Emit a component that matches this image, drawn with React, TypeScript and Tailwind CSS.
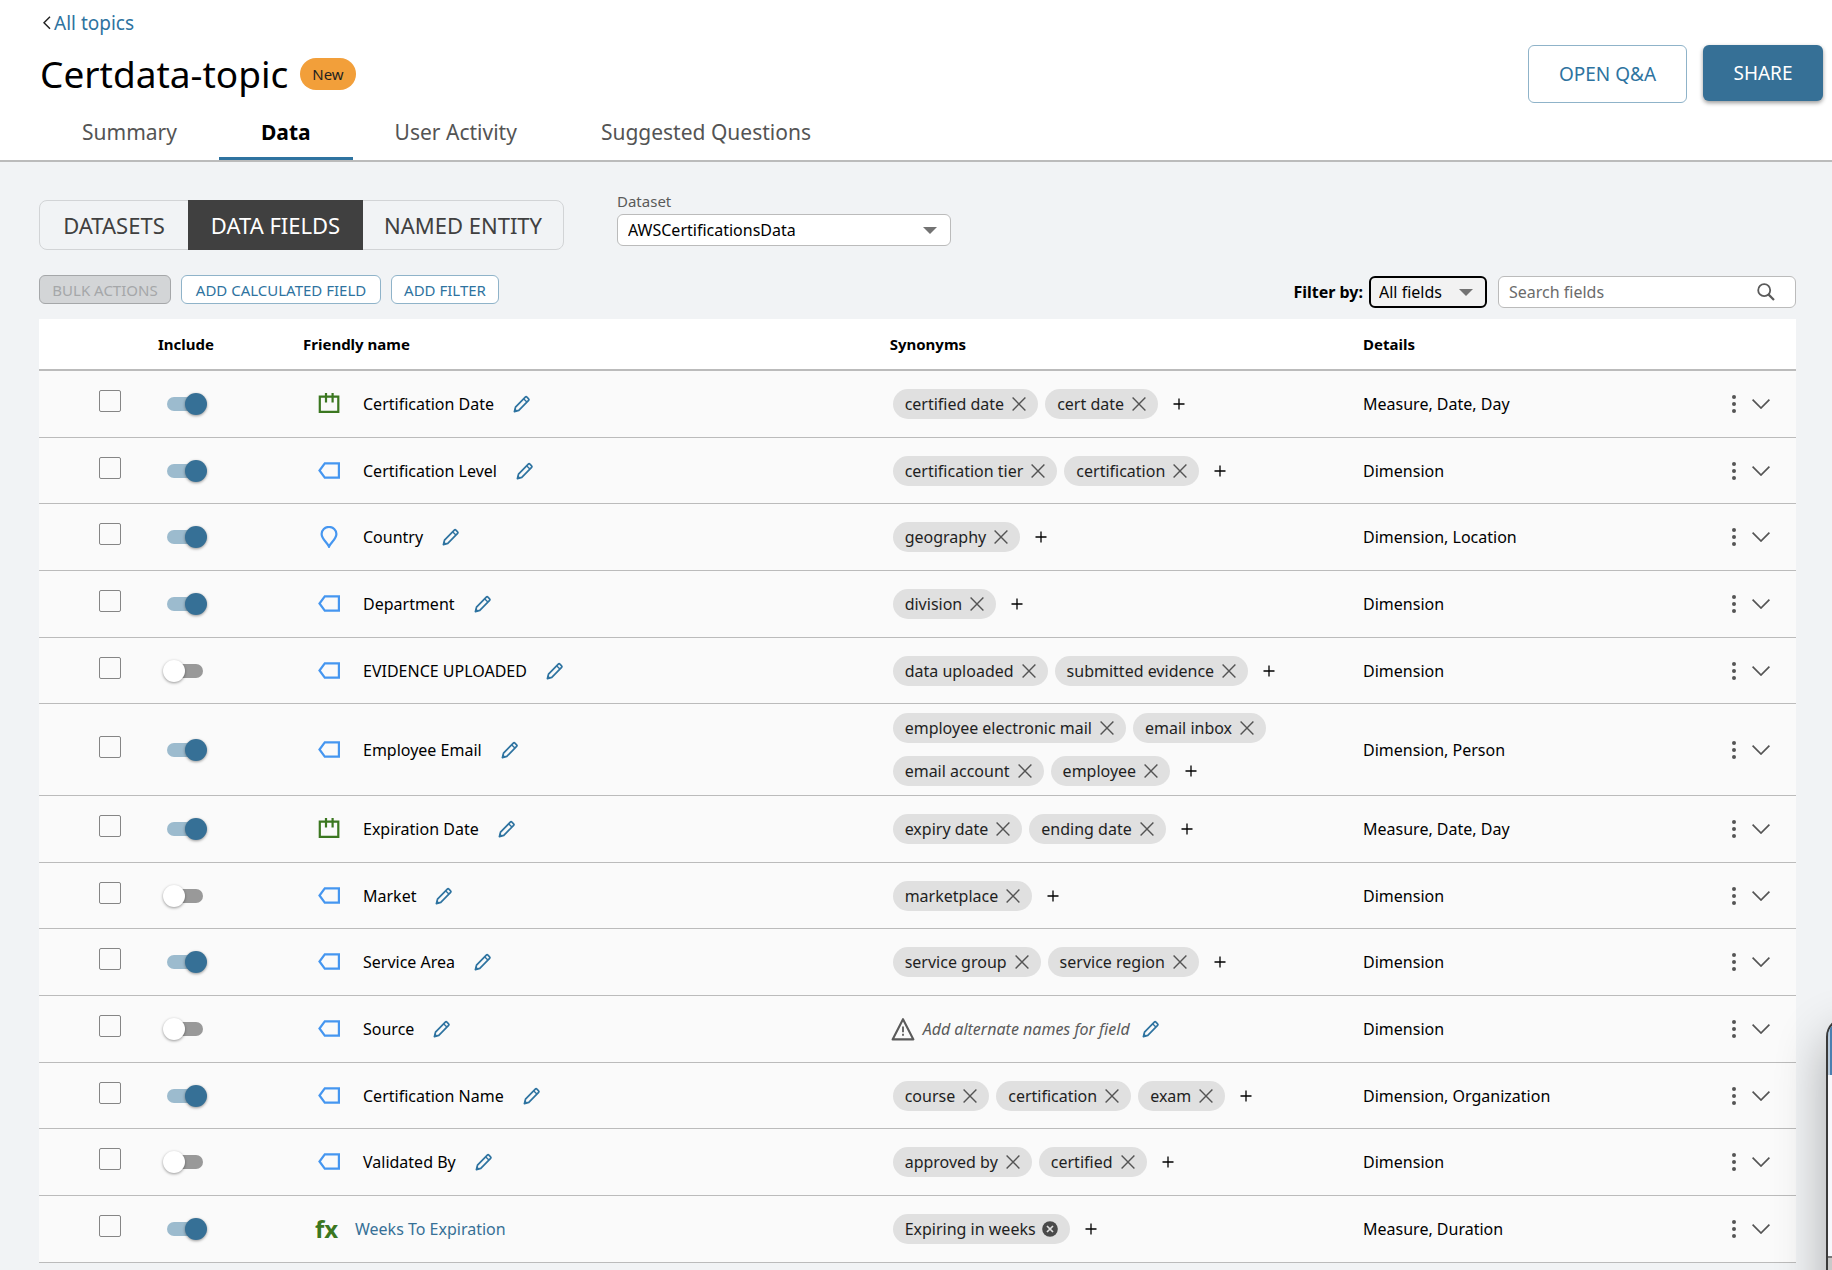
import React, { useState } from 'react';

type FieldKind = 'date' | 'tag' | 'location' | 'calculated';

interface Field {
    name: string;
    kind: FieldKind;
    included: boolean;
    synonyms: string[];
    details: string;
}

const FIELDS: Field[] = [
    { name: 'Certification Date', kind: 'date', included: true, synonyms: ['certified date', 'cert date'], details: 'Measure, Date, Day' },
    { name: 'Certification Level', kind: 'tag', included: true, synonyms: ['certification tier', 'certification'], details: 'Dimension' },
    { name: 'Country', kind: 'location', included: true, synonyms: ['geography'], details: 'Dimension, Location' },
    { name: 'Department', kind: 'tag', included: true, synonyms: ['division'], details: 'Dimension' },
    { name: 'EVIDENCE UPLOADED', kind: 'tag', included: false, synonyms: ['data uploaded', 'submitted evidence'], details: 'Dimension' },
    { name: 'Employee Email', kind: 'tag', included: true, synonyms: ['employee electronic mail', 'email inbox', 'email account', 'employee'], details: 'Dimension, Person' },
    { name: 'Expiration Date', kind: 'date', included: true, synonyms: ['expiry date', 'ending date'], details: 'Measure, Date, Day' },
    { name: 'Market', kind: 'tag', included: false, synonyms: ['marketplace'], details: 'Dimension' },
    { name: 'Service Area', kind: 'tag', included: true, synonyms: ['service group', 'service region'], details: 'Dimension' },
    { name: 'Source', kind: 'tag', included: false, synonyms: [], details: 'Dimension' },
    { name: 'Certification Name', kind: 'tag', included: true, synonyms: ['course', 'certification', 'exam'], details: 'Dimension, Organization' },
    { name: 'Validated By', kind: 'tag', included: false, synonyms: ['approved by', 'certified'], details: 'Dimension' },
    { name: 'Weeks To Expiration', kind: 'calculated', included: true, synonyms: ['Expiring in weeks'], details: 'Measure, Duration' },
];

const TABS = ['Summary', 'Data', 'User Activity', 'Suggested Questions'];

const PencilIcon = () => (
    <svg className="w-[18px] h-[18px] text-[#2e73a0]" viewBox="0 0 18 18" fill="none" stroke="currentColor" strokeWidth="1.7" strokeLinejoin="round">
        <path d="M1.4 16.6 2.5 12.2 12.3 2.1Q13.1 1.3 13.9 2.1L15.6 3.8Q16.4 4.6 15.6 5.4L5.8 15.4Z" />
        <path d="M10.8 3.9 13.9 7" strokeWidth="1.4" />
        <path d="M1.4 16.6 2.1 13.9 4.1 15.9Z" fill="currentColor" strokeWidth="1" />
    </svg>
);

const CloseIcon = () => (
    <svg className="w-[14px] h-[14px]" viewBox="0 0 14 14" fill="none" stroke="#545454" strokeWidth="1.4">
        <path d="M.6.6 13.4 13.4M13.4.6.6 13.4" />
    </svg>
);

const CloseFilledIcon = () => (
    <svg className="w-4 h-4" viewBox="0 0 16 16" fill="none">
        <circle cx="8" cy="8" r="7.8" fill="#4a4a4a" />
        <path d="M5 5 11 11M11 5 5 11" stroke="#e0e0e0" strokeWidth="1.7" />
    </svg>
);

const CaretIcon = () => (
    <svg className="w-[14px] h-[7px]" viewBox="0 0 14 7">
        <path d="M0 0H14L7 7Z" fill="#737373" />
    </svg>
);

const KindIcon = ({ kind }: { kind: FieldKind }) => {
    switch (kind) {
        case 'date':
            return (
                <svg className="w-[22px] h-[22px]" viewBox="0 0 22 22" fill="none" stroke="#3b7720" strokeWidth="2.2">
                    <path d="M1.8 3.6H20.3V18.9H1.8ZM8 0V9.4M14.6 0V9.4" />
                </svg>
            );
        case 'location':
            return (
                <svg className="w-[22px] h-[22px]" viewBox="0 0 22 22" fill="none" stroke="#4596f0" strokeWidth="2.2">
                    <path d="M11 20.6C9.6 17 3.6 13 3.6 7.9A7.4 7 0 0 1 18.4 7.9C18.4 13 12.4 17 11 20.6Z" />
                </svg>
            );
        case 'calculated':
            return <span className="w-6 text-2xl leading-6 font-bold text-[#3b7720]">fx</span>;
        default:
            return (
                <svg className="w-[22px] h-[22px]" viewBox="0 0 22 22" fill="none" stroke="#4596f0" strokeWidth="2.2">
                    <path d="M6.8 3.4H20.9V17.6H6.8L1.5 10.5Z" />
                </svg>
            );
    }
};

const Synonyms = ({ field }: { field: Field }) => {
    if (field.synonyms.length === 0) {
        return (
            <div className="flex items-center pl-0.5">
                <svg className="w-6 h-6" viewBox="0 0 24 24" fill="none" stroke="#5a5a5a" strokeWidth="2.1" strokeLinejoin="round">
                    <path d="M12 2.2 22.4 22.4H1.6Z" />
                    <path d="M12 9.5V15.2M12 16.8V18.8" strokeWidth="1.8" />
                </svg>
                <span className="ml-2 italic text-[#5a5a5a]">Add alternate names for field</span>
                <button className="ml-3" aria-label={`Add synonyms for ${field.name}`}><PencilIcon /></button>
            </div>
        );
    }
    return (
        <div className="flex flex-wrap items-center gap-x-[7px] gap-y-[13px] max-w-[420px] pl-1">
            {field.synonyms.map((synonym) => (
                <span key={synonym} className="flex items-center h-[30px] px-3 rounded-full bg-[#e0e0e0] text-[#1f1f1f] whitespace-nowrap">
                    {synonym}
                    <button className={field.kind === 'calculated' ? 'ml-1.5' : 'ml-2'} aria-label={`Remove ${synonym}`}>
                        {field.kind === 'calculated' ? <CloseFilledIcon /> : <CloseIcon />}
                    </button>
                </span>
            ))}
            <button className="ml-2" aria-label={`Add synonym to ${field.name}`}>
                <svg className="w-3 h-3" viewBox="0 0 12 12" stroke="#000" strokeWidth="1.3">
                    <path d="M6 .5V11.5M.5 6H11.5" />
                </svg>
            </button>
        </div>
    );
};

const FieldRow = ({ field }: { field: Field }) => {
    const [included, setIncluded] = useState(field.included);
    const calculated = field.kind === 'calculated';

    return (
        <tr className="h-[67px] nth-[3n+2]:h-[66px] bg-[#fafafa] *:border-b *:border-[#bbb]">
            <td className="pl-[60px] pb-[6px]">
                <input
                    type="checkbox"
                    aria-label={`Select ${field.name}`}
                    className="block appearance-none w-[22px] h-[22px] border border-[#858585] rounded-[2px] checked:bg-[#367096]"
                />
            </td>
            <td className="pl-[9px]">
                <input
                    type="checkbox"
                    role="switch"
                    aria-label={`Include ${field.name}`}
                    checked={included}
                    onChange={() => setIncluded(!included)}
                    className="relative block appearance-none w-9 h-[14px] rounded-full bg-[#999] checked:bg-[#9cbbce] before:absolute before:-top-1 before:-left-1 before:w-[22px] before:h-[22px] before:rounded-full before:bg-white before:shadow-[0_1px_3px_rgba(0,0,0,0.4)] checked:before:left-[18px] checked:before:bg-[#367096]"
                />
            </td>
            <td>
                <div className={`flex items-center ${calculated ? 'pl-3 gap-4' : 'pl-[15px] gap-[23px]'}`}>
                    <KindIcon kind={field.kind} />
                    {calculated ? (
                        <a href="#" className="text-[#367096]">{field.name}</a>
                    ) : (
                        <span className="flex items-center gap-[19px]">
                            {field.name}
                            <button aria-label={`Rename ${field.name}`}><PencilIcon /></button>
                        </span>
                    )}
                </div>
            </td>
            <td className="py-[9px]"><Synonyms field={field} /></td>
            <td>{field.details}</td>
            <td>
                <div className="flex items-center justify-end gap-4 pr-[26px]">
                    <button aria-label={`Actions for ${field.name}`}>
                        <svg className="w-1 h-[18px]" viewBox="0 0 4 18" fill="#545454">
                            <circle cx="2" cy="2" r="2" />
                            <circle cx="2" cy="9" r="2" />
                            <circle cx="2" cy="16" r="2" />
                        </svg>
                    </button>
                    <button aria-label={`Expand ${field.name}`}>
                        <svg className="w-[18px] h-[10px]" viewBox="0 0 18 10" fill="none" stroke="#545454" strokeWidth="1.7">
                            <path d="M.6.6 9 9 17.4.6" />
                        </svg>
                    </button>
                </div>
            </td>
        </tr>
    );
};

const App: React.FC = () => {
    return (
        <div className="relative min-h-screen overflow-hidden bg-[#f1f3f5] font-['Noto_Sans',sans-serif] text-base leading-6 text-black">
            <header className="bg-white border-b-2 border-[#bbb]">
                <div className="flex justify-between pl-10 pr-[9px] pt-[9px]">
                    <div>
                        <a href="#" className="flex items-center gap-[3px] pl-[3px] text-[19px] leading-7 text-[#2e73a0]">
                            <svg className="w-2 h-[14px]" viewBox="0 0 8 14" fill="none" stroke="#222" strokeWidth="1.5">
                                <path d="M7 .8 1 6.8 7 12.8" />
                            </svg>
                            All topics
                        </a>
                        <div className="flex items-center gap-3 mt-[11px]">
                            <h1 className="text-[37px] leading-[52px]">Certdata-topic</h1>
                            <span className="flex items-center h-8 px-3 rounded-full bg-[#f29f3a] text-[15px] text-[#1f1f1f]">New</span>
                        </div>
                    </div>
                    <div className="flex items-start gap-4 pt-9 text-[19px]">
                        <button className="w-[159px] h-[58px] border border-[#8fb3c9] rounded-md text-[#2e73a0]">OPEN Q&amp;A</button>
                        <button className="w-[120px] h-14 rounded-md bg-[#367096] text-white shadow-[0_2px_4px_rgba(0,0,0,0.4)]">SHARE</button>
                    </div>
                </div>
                <nav className="flex pl-10 mt-[7px] text-[21px]">
                    {TABS.map((tab) => (
                        <a
                            key={tab}
                            href="#"
                            className={`px-[42px] pt-2.5 pb-[13px] border-b-3 ${tab === 'Data' ? 'font-bold border-[#2e73a0]' : 'text-[#545454] border-transparent'}`}
                        >
                            {tab}
                        </a>
                    ))}
                </nav>
            </header>

            <main className="pl-[39px] pr-9 pt-[27px] pb-2">
                <div className="flex items-end gap-[53px]">
                    <div className="flex h-[50px] mt-2.5 border border-[#d2d4d6] rounded-lg text-[22px] text-[#404040]">
                        <button className="w-[148px]">DATASETS</button>
                        <button className="w-[175px] -my-px bg-[#404040] text-white">DATA FIELDS</button>
                        <button className="w-[200px]">NAMED ENTITY</button>
                    </div>
                    <div className="pb-1">
                        <label htmlFor="dataset" className="block mb-px text-[15px] text-[#5a5a5a]">Dataset</label>
                        <div className="flex items-center w-[334px]">
                            <select id="dataset" className="appearance-none grow h-8 pl-2.5 border border-[#bbb] rounded-md bg-white">
                                <option>AWSCertificationsData</option>
                            </select>
                            <span className="pointer-events-none w-7 -ml-7"><CaretIcon /></span>
                        </div>
                    </div>
                </div>

                <div className="flex items-start justify-between mt-[25px] mb-[11px]">
                    <div className="flex gap-2.5 text-[15px] text-[#2e73a0]">
                        <button disabled className="w-[132px] h-[29px] border border-[#a5a7a9] rounded-md bg-[#d3d5d7] text-[#a5a7a9]">BULK ACTIONS</button>
                        <button className="w-[200px] h-[29px] border border-[#8fb3c9] rounded-md bg-white">ADD CALCULATED FIELD</button>
                        <button className="w-[108px] h-[29px] border border-[#8fb3c9] rounded-md bg-white">ADD FILTER</button>
                    </div>
                    <div className="flex items-center pt-px">
                        <label htmlFor="filter" className="mr-1.5 font-bold">Filter by:</label>
                        <div className="flex items-center w-[118px] mr-[11px]">
                            <select id="filter" className="appearance-none grow h-8 pl-2 border-2 border-black rounded-md bg-[#f2f2f2]">
                                <option>All fields</option>
                            </select>
                            <span className="pointer-events-none w-7 -ml-7"><CaretIcon /></span>
                        </div>
                        <div className="flex items-center w-[298px] h-8 pl-2.5 pr-5 border border-[#bbb] rounded-md bg-white">
                            <input type="text" aria-label="Search fields" placeholder="Search fields" className="grow min-w-0 outline-none placeholder:text-[#6b6b6b]" />
                            <svg className="w-[18px] h-[18px]" viewBox="0 0 18 18" fill="none" stroke="#5a5a5a" strokeWidth="1.8">
                                <circle cx="7.2" cy="7.2" r="6" />
                                <path d="M11.4 11.4 17 17" strokeWidth="2.2" />
                            </svg>
                        </div>
                    </div>
                </div>

                <table className="w-full table-fixed border-separate border-spacing-0 text-left">
                    <thead>
                        <tr className="h-[52px] bg-white text-[15px] *:border-b-2 *:border-[#bbb]">
                            <th className="w-[119px]" />
                            <th className="w-[145px]">Include</th>
                            <th className="w-1/3">Friendly name</th>
                            <th className="w-[27%] pl-px">Synonyms</th>
                            <th>Details</th>
                            <th className="w-[120px]" />
                        </tr>
                    </thead>
                    <tbody>
                        {FIELDS.map((field) => <FieldRow key={field.name} field={field} />)}
                    </tbody>
                </table>
            </main>

            {/* Floating window peeking in from the right edge */}
            <div className="absolute -right-[394px] bottom-[-146px] w-[400px] h-[400px] flex flex-col border-2 border-[#3a3a3a] rounded-[20px] overflow-hidden bg-[#f7f8fc] shadow-[0_20px_50px_rgba(0,0,0,0.3)]">
                <div className="h-14 border-l-2 border-[#b9cbdc] bg-[#4a80b0]" />
                <div className="h-[181px]" />
                <div className="grow border-t-2 border-[#777] bg-[#c9c9c9]" />
            </div>
        </div>
    );
};

export default App;
